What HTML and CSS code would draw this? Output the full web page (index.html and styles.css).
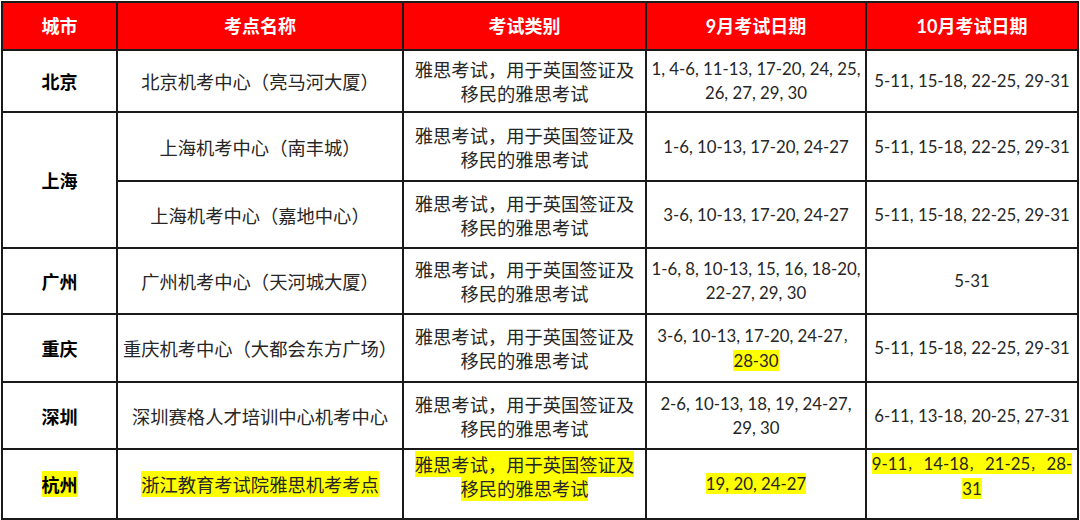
FILE: index.html
```html
<!DOCTYPE html>
<html lang="zh-CN">
<head>
<meta charset="utf-8">
<title>雅思考试日期</title>
<link rel="stylesheet" href="styles.css">
</head>
<body>
<table class="sched">
  <colgroup>
    <col class="c-city"><col class="c-name"><col class="c-type"><col class="c-sep"><col class="c-oct">
  </colgroup>
  <thead>
    <tr class="r-head">
      <th>城市</th><th>考点名称</th><th>考试类别</th><th>9月考试日期</th><th>10月考试日期</th>
    </tr>
  </thead>
  <tbody>
    <tr class="r-bj">
      <td class="city">北京</td>
      <td>北京机考中心（亮马河大厦）</td>
      <td>雅思考试，用于英国签证及<br>移民的雅思考试</td>
      <td class="num">1, 4-6, 11-13, 17-20, 24, 25,<br>26, 27, 29, 30</td>
      <td class="num">5-11, 15-18, 22-25, 29-31</td>
    </tr>
    <tr class="r-sh1">
      <td class="city" rowspan="2">上海</td>
      <td>上海机考中心（南丰城）</td>
      <td>雅思考试，用于英国签证及<br>移民的雅思考试</td>
      <td class="num">1-6, 10-13, 17-20, 24-27</td>
      <td class="num">5-11, 15-18, 22-25, 29-31</td>
    </tr>
    <tr class="r-sh2">
      <td>上海机考中心（嘉地中心）</td>
      <td>雅思考试，用于英国签证及<br>移民的雅思考试</td>
      <td class="num">3-6, 10-13, 17-20, 24-27</td>
      <td class="num">5-11, 15-18, 22-25, 29-31</td>
    </tr>
    <tr class="r-gz">
      <td class="city">广州</td>
      <td>广州机考中心（天河城大厦）</td>
      <td>雅思考试，用于英国签证及<br>移民的雅思考试</td>
      <td class="num">1-6, 8, 10-13, 15, 16, 18-20,<br>22-27, 29, 30</td>
      <td class="num">5-31</td>
    </tr>
    <tr class="r-cq">
      <td class="city">重庆</td>
      <td>重庆机考中心（大都会东方广场）</td>
      <td>雅思考试，用于英国签证及<br>移民的雅思考试</td>
      <td class="num">3-6, 10-13, 17-20, 24-27<span class="fw">，</span><br><span class="hl">28-30</span></td>
      <td class="num">5-11, 15-18, 22-25, 29-31</td>
    </tr>
    <tr class="r-sz">
      <td class="city">深圳</td>
      <td>深圳赛格人才培训中心机考中心</td>
      <td>雅思考试，用于英国签证及<br>移民的雅思考试</td>
      <td class="num">2-6, 10-13, 18, 19, 24-27,<br>29, 30</td>
      <td class="num">6-11, 13-18, 20-25, 27-31</td>
    </tr>
    <tr class="r-hz">
      <td class="city"><span class="hl">杭州</span></td>
      <td><span class="hl">浙江教育考试院雅思机考考点</span></td>
      <td class="top"><span class="hl">雅思考试，用于英国签证及<br>移民的雅思考试</span></td>
      <td class="num"><span class="hl">19, 20, 24-27</span></td>
      <td class="num top"><span class="hl">9-11<span class="fw">，</span> 14-18<span class="fw">，</span> 21-25<span class="fw">，</span> 28-<br>31</span></td>
    </tr>
  </tbody>
</table>
</body>
</html>
```
FILE: styles.css
```css
html, body {
  margin: 0;
  padding: 0;
  background: #ffffff;
}

body {
  padding: 1px 0 0 1px;
  font-family: "Lato", "Noto Sans CJK SC", sans-serif;
  color: #262626;
}

.sched {
  border-collapse: collapse;
  table-layout: fixed;
  width: 1076px;
}

.c-city { width: 115px; }
.c-name { width: 286px; }
.c-type { width: 243px; }
.c-sep  { width: 220px; }
.c-oct  { width: 212px; }

.sched th,
.sched td {
  border: 2px solid #1a1a1a;
  text-align: center;
  vertical-align: middle;
  padding: 0 2px;
  font-size: 18.3px;
  line-height: 24px;
  font-weight: 400;
  white-space: nowrap;
}

.sched th {
  background: #ff0000;
  color: #ffffff;
  font-weight: 700;
  font-size: 18px;
  font-family: "Lato", "Noto Sans CJK SC", sans-serif;
}

.sched td {
  font-family: "Noto Sans CJK SC", sans-serif;
}

.sched td.num {
  font-family: "Lato", "Noto Sans CJK SC", sans-serif;
  font-size: 16.8px;
}

.sched td.city {
  font-weight: 700;
  color: #000000;
  font-size: 18px;
}

.sched td.top {
  vertical-align: top;
  padding-top: 2px;
}

.fw {
  font-family: "Noto Sans CJK SC", sans-serif;
  font-size: 12px;
}

.hl {
  background: #ffff00;
}

.r-head { height: 48px; }
.r-bj   { height: 62px; }
.r-sh1  { height: 69px; }
.r-sh2  { height: 67px; }
.r-gz   { height: 66px; }
.r-cq   { height: 68px; }
.r-sz   { height: 67px; }
.r-hz   { height: 70px; }
```
